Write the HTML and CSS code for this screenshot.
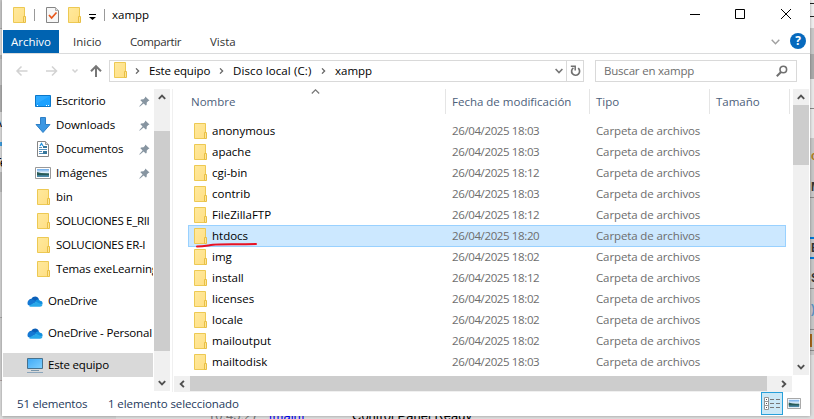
FILE: index.html
```html
<!DOCTYPE html>
<html lang="es">
<head>
<meta charset="utf-8">
<title>xampp</title>
<link rel="stylesheet" href="styles.css">
</head>
<body>
<svg class="defs" width="0" height="0">
  <defs>
    <linearGradient id="fg" x1="0" y1="0" x2="1" y2="1"><stop offset="0" stop-color="#ffe99c"/><stop offset="1" stop-color="#ffdf85"/></linearGradient>
    <linearGradient id="sky" x1="0" y1="0" x2="0" y2="1"><stop offset="0" stop-color="#6aa9ea"/><stop offset=".45" stop-color="#e4f1fa"/><stop offset=".6" stop-color="#356a6e"/><stop offset="1" stop-color="#4f8fb5"/></linearGradient>
    <linearGradient id="scr" x1="0" y1="0" x2="1" y2="1"><stop offset="0" stop-color="#3fa9f5"/><stop offset="1" stop-color="#7fd0ff"/></linearGradient>
    <symbol id="folder" viewBox="0 0 13 16"><path d="M.5.5h11v15H.5z" fill="url(#fg)" stroke="#edc953"/><path d="M10.500 9.500h2v6h-2z" fill="#ffe596" stroke="#e8bf45"/></symbol>
    <symbol id="cloud" viewBox="0 0 16 11"><path d="M4 8C0 7 1 3 4.500 2.800 6-.5 11-.5 12 3.500L8 7z" fill="#0a5fb8"/><path d="M1 9C-.5 6 1.500 3.300 4.500 3.200c2 0 3 1.200 4.500 2L4 10z" fill="#1478d4"/><path d="M8 5.500c1-2.500 4-2.700 5-.7 2 0 3 1.700 2.500 3.500l-3 1z" fill="#1490df"/><path d="M2 9.700 9 5.800l6.500 3c-.3 1.200-1.200 1.900-2.500 1.900H4C3 10.700 2.400 10.400 2 9.700z" fill="#28a8ea"/></symbol>
    <symbol id="pin" viewBox="0 0 11 11"><path d="M6.300.5 10.500 4.500 9.300 5 7.800 6.500 7.600 9 6.800 9.600 4.600 7.400.7 10.700.3 10.300 3.600 6.400 1.400 4.200 2 3.400 4.500 3.200 6 1.700z" fill="#8795a1"/></symbol>
    <symbol id="photo" viewBox="0 0 16 12"><path d="M.5.5h15v11H.5z" fill="#fff" stroke="#999"/><path d="M2 2h12v8H2z" fill="url(#sky)"/><path d="M2 5l4 1 8 1v1H2z" fill="#285b57"/></symbol>
    <symbol id="up" viewBox="0 0 8 6"><path d="M.8 4.900 4 1.700 7.200 4.900" fill="none" stroke="#505050" stroke-width="1.900"/></symbol>
    <symbol id="down" viewBox="0 0 8 6"><path d="M.8 1.100 4 4.300 7.200 1.100" fill="none" stroke="#505050" stroke-width="1.900"/></symbol>
    <symbol id="right" viewBox="0 0 6 8"><path d="M1.100.8 4.300 4 1.100 7.200" fill="none" stroke="#505050" stroke-width="1.900"/></symbol>
    <symbol id="left" viewBox="0 0 6 8"><path d="M4.900.8 1.700 4 4.900 7.200" fill="none" stroke="#505050" stroke-width="1.900"/></symbol>
    <symbol id="crumb" viewBox="0 0 5 6"><path d="M1 .4 3.600 3 1 5.600" fill="none" stroke="#666" stroke-width="1.300"/></symbol>
  </defs>
</svg>
<div class="backdrop">
  <div class="edge-left"><i>A</i><i class="dot"></i><i>Te</i></div>
  <div class="edge-right"><b class="l1"></b><b class="l2"></b><b class="l3"></b><i class="t1">c</i><i class="t2">M</i><b class="l4"></b><b class="blue"></b><i class="t3">E</i><b class="blue2"></b><i class="t4">S</i><b class="l5"></b><i class="t5">)</i><b class="l6"></b><b class="brown"></b><b class="l7"></b></div>
  <div class="log"><span class="time">10:45:27</span><span class="tag">[main]</span><span>Control Panel Ready</span></div>
</div>
<main class="window">
  <header class="title">
    <svg class="tfolder" width="13" height="16"><use href="#folder"/></svg><i class="sep s1"></i>
    <svg class="check" width="13" height="16" viewBox="0 0 13 16"><path d="M.5.5h9l3 3v12H.5z" fill="#f7f7f7" stroke="#858585"/><path d="M9.500.5v3h3" fill="#ddd" stroke="#aaa"/><path d="m3 8 2.600 3L10.500 5.500" fill="none" stroke="#e8581c" stroke-width="1.700"/></svg>
    <svg class="tfolder2" width="13" height="16"><use href="#folder"/></svg>
    <svg class="menu" width="7" height="6" viewBox="0 0 7 6"><path d="M0 0h7v1H0zM0 3h7L3.500 6z"/></svg><i class="sep s2"></i>
    <span class="name">xampp</span>
    <svg class="controls" width="104" height="12" viewBox="0 0 104 12" fill="none" stroke="#000"><path d="M1 6.500h10M46.500 1.500h9v9h-9zM92 1l10 10M102 1 92 11"/></svg>
  </header>
  <nav class="tabs">
    <span class="active">Archivo</span><span class="inicio">Inicio</span><span class="compartir">Compartir</span><span class="vista">Vista</span>
    <svg class="collapse" width="9" height="6" viewBox="0 0 9 6"><path d="m.7.8 3.800 4 3.800-4" fill="none" stroke="#a0a0a0" stroke-width="1.400"/></svg>
    <span class="help">?</span>
  </nav>
  <section class="address">
    <svg class="arrows" width="90" height="14" viewBox="0 0 90 14" fill="none"><path d="M12.500 7H2M6.500 2.500 2 7l4.500 4.500M31 7h11M37 2.500 41.500 7 37 11.500M57.500 5.500 60 8l2.500-2.500" stroke="#d2d2d2" stroke-width="1.500"/><path d="M81 13V2.500M76 7.300 81 2.200l5 5.100" stroke="#777" stroke-width="2"/></svg>
    <div class="path">
      <svg class="pfolder" width="13" height="16"><use href="#folder"/></svg>
      <svg class="c1" width="5" height="6"><use href="#crumb"/></svg><span class="p1">Este equipo</span>
      <svg width="5" height="6"><use href="#crumb"/></svg><span class="p2">Disco local (C:)</span>
      <svg width="5" height="6"><use href="#crumb"/></svg><span class="p3">xampp</span>
      <svg class="drop" width="8" height="6" viewBox="0 0 8 6"><path d="m.6 1 3.400 3.500L7.400 1" fill="none" stroke="#777" stroke-width="1.600"/></svg>
      <div class="refresh"><svg width="11" height="12" viewBox="0 0 11 12"><path d="M8.200 3.200A4 4 0 1 1 3.400 2.900" fill="none" stroke="#707070" stroke-width="1.700"/><path d="M.8 1.200h4.400v4.400" fill="none" stroke="#707070" stroke-width="1.500"/></svg></div>
    </div>
    <div class="search"><span>Buscar en xampp</span><svg width="12" height="12" viewBox="0 0 12 12" fill="none" stroke="#707070"><circle cx="7.300" cy="4.500" r="3.300" stroke-width="1.600"/><path d="M5 7 .8 11.200" stroke-width="2"/></svg></div>
  </section>
  <section class="body">
    <aside class="side">
      <div class="tree">
        <div class="item sub"><svg width="16" height="12" viewBox="0 0 16 12"><path d="M.5.5h15v11H.5z" fill="#1ba1ff" stroke="#0b77c9"/><path d="M1 1h14L1 9z" fill="#42b4ff" opacity=".5"/><path d="M2 10.500h1M11 10.500h1M13 10.500h1" stroke="#fff"/></svg><span>Escritorio</span><svg class="pin" width="11" height="11"><use href="#pin"/></svg></div>
        <div class="item sub"><svg width="16" height="16" viewBox="0 0 16 16"><path d="M5.500.5h5v7H15l-7 8-7-8h4.500z" fill="#3b97e3" stroke="#2d7fc6"/></svg><span class="w-down">Downloads</span><svg class="pin" width="11" height="11"><use href="#pin"/></svg></div>
        <div class="item sub"><svg width="16" height="16" viewBox="0 0 16 16"><path d="M2.500.5h8l3 3v12h-11z" fill="#fff" stroke="#858585"/><path d="M10.500.5v3h3" fill="#ddd" stroke="#999"/><path d="M4 6.500h3M4 8.500h8M4 10.500h3M4 12.500h8" stroke="#548fbc"/><path d="M5 5 6.500 2.500 8 5" fill="none" stroke="#2292de" stroke-width="1.300"/><path d="M8 5h4v2H8zM8 10h4v3H8z" fill="#38779b"/></svg><span class="w-doc">Documentos</span><svg class="pin" width="11" height="11"><use href="#pin"/></svg></div>
        <div class="item sub"><svg width="16" height="12"><use href="#photo"/></svg><span>Imágenes</span><svg class="pin" width="11" height="11"><use href="#pin"/></svg></div>
        <div class="item sub dir"><svg width="13" height="16"><use href="#folder"/></svg><span>bin</span></div>
        <div class="item sub dir"><svg width="13" height="16"><use href="#folder"/></svg><span class="w-sol">SOLUCIONES E_RII</span></div>
        <div class="item sub dir"><svg width="13" height="16"><use href="#folder"/></svg><span class="w-sol">SOLUCIONES ER-I</span></div>
        <div class="item sub dir"><svg width="13" height="16"><use href="#folder"/></svg><span class="w-temas">Temas exeLearning</span></div>
        <div class="item root"><svg width="16" height="11"><use href="#cloud"/></svg><span>OneDrive</span></div>
        <div class="item root"><svg width="16" height="11"><use href="#cloud"/></svg><span>OneDrive - Personal</span></div>
        <div class="item root selected"><svg width="16" height="15" viewBox="0 0 16 15"><path d="M.5.5h15v10H.5z" fill="url(#scr)" stroke="#46718d"/><path d="M4 12.500h8" stroke="#7895aa"/><path d="M0 14.500h16" stroke="#8ba5bb"/></svg><span>Este equipo</span></div>
        <div class="item root net"><svg width="16" height="16" viewBox="0 0 16 16"><circle cx="10.500" cy="5" r="5" fill="#79b4cc"/><path d="M7 2h5v3H9z" fill="#d9eff2"/><path d="M1 5h8v7H1z" fill="#5fa8cf"/></svg></div>
      </div>
      <div class="vbar"><div class="btn"><svg width="8" height="6"><use href="#up"/></svg></div><div class="space"></div><div class="thumb"></div><div class="grow"></div><div class="btn"><svg width="8" height="6"><use href="#down"/></svg></div></div>
    </aside>
    <div class="files">
      <div class="upper">
        <div class="list">
          <div class="head"><span>Nombre<svg class="sort" width="9" height="5" viewBox="0 0 9 5"><path d="m.8 4.500 3.700-3.700 3.700 3.700" fill="none" stroke="#777" stroke-width="1.200"/></svg></span><span class="w-fecha">Fecha de modificación</span><span>Tipo</span><span>Tamaño</span></div>
          <div class="row"><svg width="13" height="16"><use href="#folder"/></svg><span>anonymous</span><time>26/04/2025 18:03</time><em>Carpeta de archivos</em></div>
          <div class="row"><svg width="13" height="16"><use href="#folder"/></svg><span>apache</span><time>26/04/2025 18:03</time><em>Carpeta de archivos</em></div>
          <div class="row"><svg width="13" height="16"><use href="#folder"/></svg><span>cgi-bin</span><time>26/04/2025 18:12</time><em>Carpeta de archivos</em></div>
          <div class="row"><svg width="13" height="16"><use href="#folder"/></svg><span>contrib</span><time>26/04/2025 18:03</time><em>Carpeta de archivos</em></div>
          <div class="row"><svg width="13" height="16"><use href="#folder"/></svg><span>FileZillaFTP</span><time>26/04/2025 18:12</time><em>Carpeta de archivos</em></div>
          <div class="row chosen"><svg width="13" height="16"><use href="#folder"/></svg><span>htdocs</span><time>26/04/2025 18:20</time><em>Carpeta de archivos</em><svg class="mark" width="64" height="6" viewBox="0 0 64 6"><path d="M2 4.500C9 4.500 12 3.500 18 2.700S40 2.500 61 2" fill="none" stroke="#e81123" stroke-width="2" stroke-linecap="round"/></svg></div>
          <div class="row"><svg width="13" height="16"><use href="#folder"/></svg><span>img</span><time>26/04/2025 18:02</time><em>Carpeta de archivos</em></div>
          <div class="row"><svg width="13" height="16"><use href="#folder"/></svg><span>install</span><time>26/04/2025 18:12</time><em>Carpeta de archivos</em></div>
          <div class="row"><svg width="13" height="16"><use href="#folder"/></svg><span>licenses</span><time>26/04/2025 18:02</time><em>Carpeta de archivos</em></div>
          <div class="row"><svg width="13" height="16"><use href="#folder"/></svg><span>locale</span><time>26/04/2025 18:02</time><em>Carpeta de archivos</em></div>
          <div class="row"><svg width="13" height="16"><use href="#folder"/></svg><span>mailoutput</span><time>26/04/2025 18:02</time><em>Carpeta de archivos</em></div>
          <div class="row"><svg width="13" height="16"><use href="#folder"/></svg><span>mailtodisk</span><time>26/04/2025 18:03</time><em>Carpeta de archivos</em></div>
          <div class="row"><svg width="13" height="16"><use href="#folder"/></svg></div>
        </div>
        <div class="vbar main"><div class="btn"><svg width="8" height="6"><use href="#up"/></svg></div><div class="thumb"></div><div class="grow"></div><div class="btn"><svg width="8" height="6"><use href="#down"/></svg></div></div>
      </div>
      <div class="hbar"><div class="btn"><svg width="6" height="8"><use href="#left"/></svg></div><div class="thumb"></div><div class="grow"></div><div class="btn"><svg width="6" height="8"><use href="#right"/></svg></div></div>
    </div>
  </section>
  <footer class="status">
    <span class="count">51 elementos</span><span class="picked">1 elemento seleccionado</span>
    <div class="view on"><svg width="17" height="13" viewBox="0 0 17 13" fill="none"><path d="M.5.5h4v12h-4zM.5 4.500h4M.5 8.500h4" fill="#fff" stroke="#969696"/><path d="M2 2.500h1M2 6.500h1M2 10.500h1" stroke="#555"/><path d="M6 2.500h4M12 2.500h4M6 6.500h4M12 6.500h4M6 10.500h4M12 10.500h4" stroke="#777"/></svg></div>
    <div class="view"><svg width="14" height="11" viewBox="0 0 16 12" preserveAspectRatio="none"><use href="#photo"/></svg></div>
  </footer>
</main>
</body>
</html>
```
FILE: styles.css
```css
* { box-sizing: border-box; }
body { margin: 0; width: 814px; height: 419px; overflow: hidden; position: relative; background: #d6d6d6; font: 11.5px/16px "Open Sans", "Noto Sans", sans-serif; color: #000; }
svg { display: block; flex: none; }
span, time, em { white-space: nowrap; font-style: normal; }
.defs { position: absolute; }

.backdrop { position: absolute; inset: 0; background: #d3d3d3; }
.edge-left { position: absolute; left: 0; top: 0; width: 3px; height: 419px; overflow: hidden; background: linear-gradient(#c9c9c9 0 28px, #aaa 28px 29px, #dcdcdc 29px 55px, #b5b5b5 55px 59px, #c9c9c9 59px 85px, #b0b0b0 85px 112px, #dedede 112px 172px, #bcbcbc 172px 192px, #d5d5d5 192px 317px, #aaa 317px 318px, #d0d0d0 318px 380px, #b1a4a4 380px 381px, #ddd 381px); padding-top: 115px; }
.edge-left i { display: block; height: 20px; font: 12px/16px "Liberation Sans", sans-serif; text-indent: -6px; }
.edge-left .dot { width: 2px; height: 4px; background: #3f9fe0; margin: 7px 0 9px; }
.edge-right { position: absolute; right: 0; top: 0; width: 5px; height: 419px; overflow: hidden; background: linear-gradient(#eee 0 28px, #c8c8c8 28px 54px, #aaa 54px 79px, #e8e8e8 79px 138px, #c7c7c7 138px 355px, #ddd 355px); }
.edge-right b { position: absolute; left: 0; width: 5px; height: 1px; background: #888; }
.edge-right i { position: absolute; left: 2px; font: bold 12px/14px "Liberation Sans", sans-serif; color: #333; }
.edge-right .l1 { top: 3px; background: #222; } .edge-right .l2 { top: 16px; background: #222; } .edge-right .l3 { top: 108px; }
.edge-right .t1 { top: 149px; color: #b27b21; } .edge-right .t2 { top: 180px; }
.edge-right .l4 { top: 197px; } .edge-right .blue { top: 237px; height: 2px; background: #0078d7; }
.edge-right .t3 { top: 241px; } .edge-right .blue2 { top: 257px; height: 2px; background: #0078d7; }
.edge-right .t4 { top: 271px; } .edge-right .l5 { top: 288px; } .edge-right .t5 { top: 302px; color: #5a91c2; }
.edge-right .l6 { top: 329px; } .edge-right .brown { top: 334px; left: 1px; width: 2px; height: 13px; background: #a9681d; } .edge-right .l7 { top: 350px; }
.log { position: absolute; left: 116px; right: 0; top: 408px; height: 11px; overflow: hidden; background: #dedede; padding-left: 92px; display: flex; font: 13px/15px "Liberation Sans", sans-serif; }
.log .time { width: 61px; color: #777; }
.log .tag { width: 83px; color: #00f; }

.window { position: relative; display: flex; flex-direction: column; margin: 0 0 0 2px; width: 808px; height: 416px; background: #fff; box-shadow: 0 0 3px rgba(0,0,0,.35); padding-left: 1px; }
.title { display: flex; align-items: center; height: 30px; padding: 0 17px 0 10px; }
.title .sep { width: 1px; height: 12px; background: #999; }
.title .s1 { margin-left: 8px; }
.check { margin-left: 11px; }
.tfolder2 { margin-left: 9px; }
.menu { margin: 3px 0 0 8px; }
.title .s2 { margin-left: 8px; }
.name { margin: 0 0 0 7px; }
.controls { margin: -2px 0 0 auto; }

.tabs { display: flex; height: 24px; border-bottom: 1px solid #dadbdc; line-height: 24px; color: #333; }
.tabs .active { width: 56px; background: #0063b1; color: #fff; text-align: center; height: 23px; }
.inicio { margin-left: 14px; width: 57px; }
.compartir { width: 80px; letter-spacing: -.4px; }
.collapse { margin: 9px 0 0 auto; }
.tabs .help { width: 16px; height: 16px; margin: 3px 4px 0 10px; border-radius: 50%; background: #0669bd; color: #fff; font-size: 12px; font-weight: 700; line-height: 16px; text-align: center; }

.address { display: flex; height: 35px; padding: 6px 0 7px; }
.arrows { margin: 4px 0 0 12px; }
.path { display: flex; align-items: center; width: 475px; height: 22px; margin-left: 4px; border: 1px solid #d9d9d9; padding-left: 4px; }
.pfolder { margin-top: -3px; }
.c1 { margin-left: 8px; }
.path span { margin-left: 9px; }
.p1 { width: 70px; letter-spacing: -.15px; }
.p2 { width: 88px; letter-spacing: .1px; }
.drop { margin-left: auto; }
.refresh { width: 17px; height: 20px; margin-left: 3px; border-left: 1px solid #d9d9d9; display: grid; place-items: center; }
.search { display: flex; align-items: center; justify-content: space-between; width: 202px; height: 22px; margin-left: 11px; border: 1px solid #d9d9d9; padding: 0 8px; color: #6d6d6d; letter-spacing: -.2px; }

.body { display: flex; height: 303px; }
.side { display: flex; width: 170px; height: 303px; border-right: 1px solid #f0f0f0; }
.tree { width: 150px; height: 303px; overflow: hidden; }
.item { display: flex; align-items: center; height: 24px; }
.sub { padding-left: 32px; }
.sub span { margin-left: 5px; letter-spacing: -.1px; }
.dir { padding-left: 34px; }
.dir span { margin-left: 6px; }
.sub .w-sol { letter-spacing: -.3px; }
.sub .w-temas { letter-spacing: -.12px; }
.root { padding-left: 24px; margin-top: 8px; }
.root span { margin-left: 5px; letter-spacing: -.17px; }
.selected { background: #d9d9d9; }
.pin { margin: 0 3px 0 auto; }
.net { padding-left: 24px; }
.net svg { margin-top: 9px; }
.vbar { display: flex; flex-direction: column; width: 16px; height: 302px; margin-left: 1px; background: #f0f0f0; }
.btn { display: grid; place-items: center; width: 16px; height: 16px; flex: none; }
.thumb { background: #cdcdcd; flex: none; }
.grow { flex: 1; }
.space { height: 26px; }
.side .thumb { height: 220px; }
.files { width: 637px; padding-left: 1px; }
.upper { display: flex; height: 287px; }
.list { width: 619px; height: 286px; overflow: hidden; }
.main { height: 286px; margin: 0; }
.main .thumb { height: 60px; }
.head { display: grid; grid-template-columns: 272px 144px 120px 80px; height: 31px; color: #4c607a; }
.head span { height: 25px; padding-left: 6px; line-height: 25px; border-right: 1px solid #e5e5e5; position: relative; }
.head span:first-child { padding-left: 17px; }
.sort { position: absolute; left: 137px; top: 0; }
.row { display: grid; grid-template-columns: 18px 240px 144px 1fr; align-items: center; width: 598px; height: 21px; margin-left: 14px; padding-left: 6px; color: #6d6d6d; }
.row span { color: #000; }
.row time { letter-spacing: -.38px; }
.row em { letter-spacing: -.12px; }
.chosen { position: relative; height: 22px; margin-bottom: -1px; background: #cce8ff; box-shadow: inset 0 0 0 1px #99d1ff; }
.mark { position: absolute; left: 7px; top: 17px; }
.hbar { display: flex; width: 618px; height: 16px; background: #f0f0f0; }
.hbar .thumb { width: 577px; height: 15px; }

.status { display: flex; height: 24px; color: #1e395b; line-height: 24px; padding-right: 5px; letter-spacing: -.1px; }
.count { width: 91px; padding-left: 14px; letter-spacing: -.2px; }
.picked { padding-left: 14px; }
.view { display: grid; place-items: center; width: 22px; height: 23px; }
.view.on { margin-left: auto; background: #cbe8f6; border: 1px solid #26a0da; }
```
